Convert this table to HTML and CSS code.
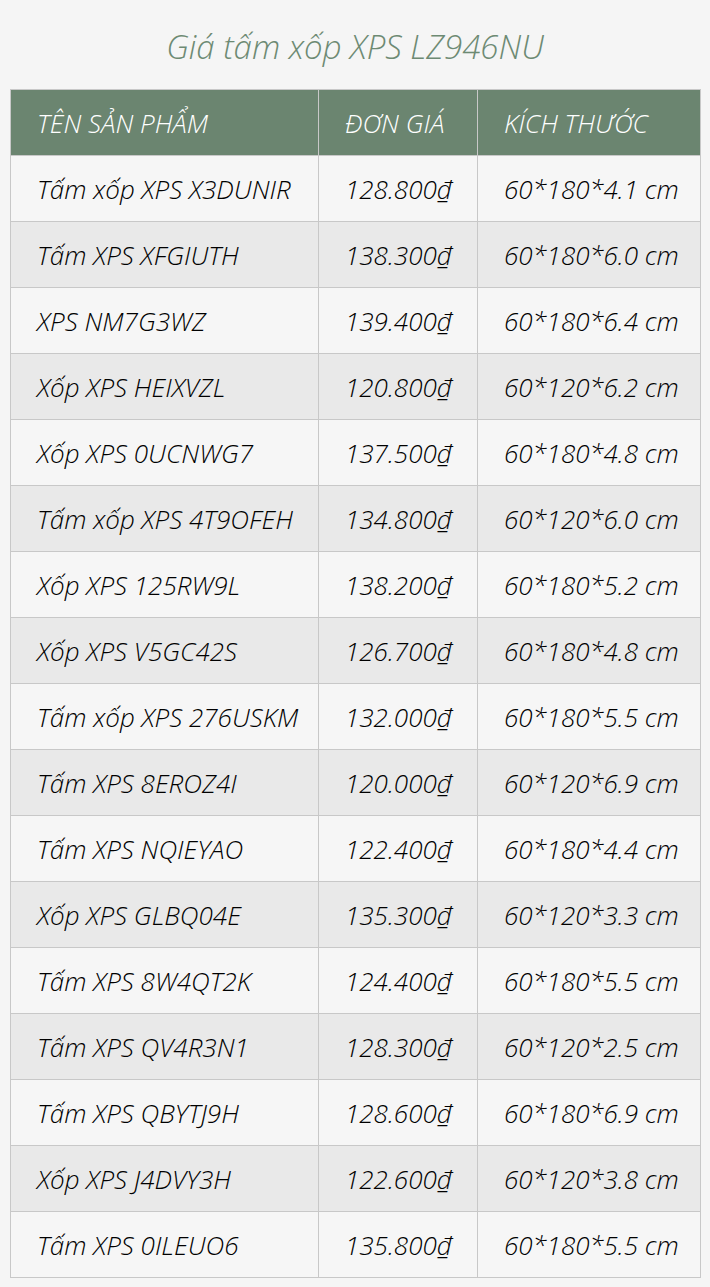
FILE: index.html
```html
<!DOCTYPE html>
<html lang="vi">
<head>
<meta charset="utf-8">
<title>Giá tấm xốp XPS LZ946NU</title>
<link rel="stylesheet" href="styles.css">
</head>
<body>
<h1 class="title">Giá tấm xốp XPS LZ946NU</h1>
<table class="price-table">
  <thead>
    <tr><th class="c-name">TÊN SẢN PHẨM</th><th class="c-price">ĐƠN GIÁ</th><th class="c-size">KÍCH THƯỚC</th></tr>
  </thead>
  <tbody>
    <tr><td>Tấm xốp XPS X3DUNIR</td><td>128.800₫</td><td>60*180*4.1 cm</td></tr>
    <tr><td>Tấm XPS XFGIUTH</td><td>138.300₫</td><td>60*180*6.0 cm</td></tr>
    <tr><td>XPS NM7G3WZ</td><td>139.400₫</td><td>60*180*6.4 cm</td></tr>
    <tr><td>Xốp XPS HEIXVZL</td><td>120.800₫</td><td>60*120*6.2 cm</td></tr>
    <tr><td>Xốp XPS 0UCNWG7</td><td>137.500₫</td><td>60*180*4.8 cm</td></tr>
    <tr><td>Tấm xốp XPS 4T9OFEH</td><td>134.800₫</td><td>60*120*6.0 cm</td></tr>
    <tr><td>Xốp XPS 125RW9L</td><td>138.200₫</td><td>60*180*5.2 cm</td></tr>
    <tr><td>Xốp XPS V5GC42S</td><td>126.700₫</td><td>60*180*4.8 cm</td></tr>
    <tr><td>Tấm xốp XPS 276USKM</td><td>132.000₫</td><td>60*180*5.5 cm</td></tr>
    <tr><td>Tấm XPS 8EROZ4I</td><td>120.000₫</td><td>60*120*6.9 cm</td></tr>
    <tr><td>Tấm XPS NQIEYAO</td><td>122.400₫</td><td>60*180*4.4 cm</td></tr>
    <tr><td>Xốp XPS GLBQ04E</td><td>135.300₫</td><td>60*120*3.3 cm</td></tr>
    <tr><td>Tấm XPS 8W4QT2K</td><td>124.400₫</td><td>60*180*5.5 cm</td></tr>
    <tr><td>Tấm XPS QV4R3N1</td><td>128.300₫</td><td>60*120*2.5 cm</td></tr>
    <tr><td>Tấm XPS QBYTJ9H</td><td>128.600₫</td><td>60*180*6.9 cm</td></tr>
    <tr><td>Xốp XPS J4DVY3H</td><td>122.600₫</td><td>60*120*3.8 cm</td></tr>
    <tr><td>Tấm XPS 0ILEUO6</td><td>135.800₫</td><td>60*180*5.5 cm</td></tr>
  </tbody>
</table>
</body>
</html>
```
FILE: styles.css
```css
html, body {
  margin: 0;
  padding: 0;
  background: #f5f5f5;
}
body {
  padding: 0 10px 0 10px;
  font-family: "Open Sans", "Liberation Sans", sans-serif;
  font-style: italic;
  font-weight: 300;
}
.title {
  margin: 0;
  height: 89px;
  box-sizing: border-box;
  padding-top: 26px;
  text-align: center;
  font-size: 33px;
  font-weight: 300;
  line-height: 42px;
  color: #6d8a73;
}
.price-table {
  width: 690px;
  border-collapse: collapse;
  table-layout: fixed;
}
.c-name { width: 308px; }
.c-price { width: 159px; }
.c-size { width: 223px; }
.price-table th,
.price-table td {
  height: 66px;
  box-sizing: border-box;
  padding: 0 0 0 26px;
  border: 1px solid #c8c8c8;
  text-align: left;
  font-size: 26px;
  font-weight: 300;
  white-space: nowrap;
}
.price-table th {
  background: #6b8570;
  color: #ffffff;
}
.price-table td {
  color: #000000;
}
.price-table tbody tr:nth-child(odd) td { background: #f6f6f6; }
.price-table tbody tr:nth-child(even) td { background: #e9e9e9; }
```
